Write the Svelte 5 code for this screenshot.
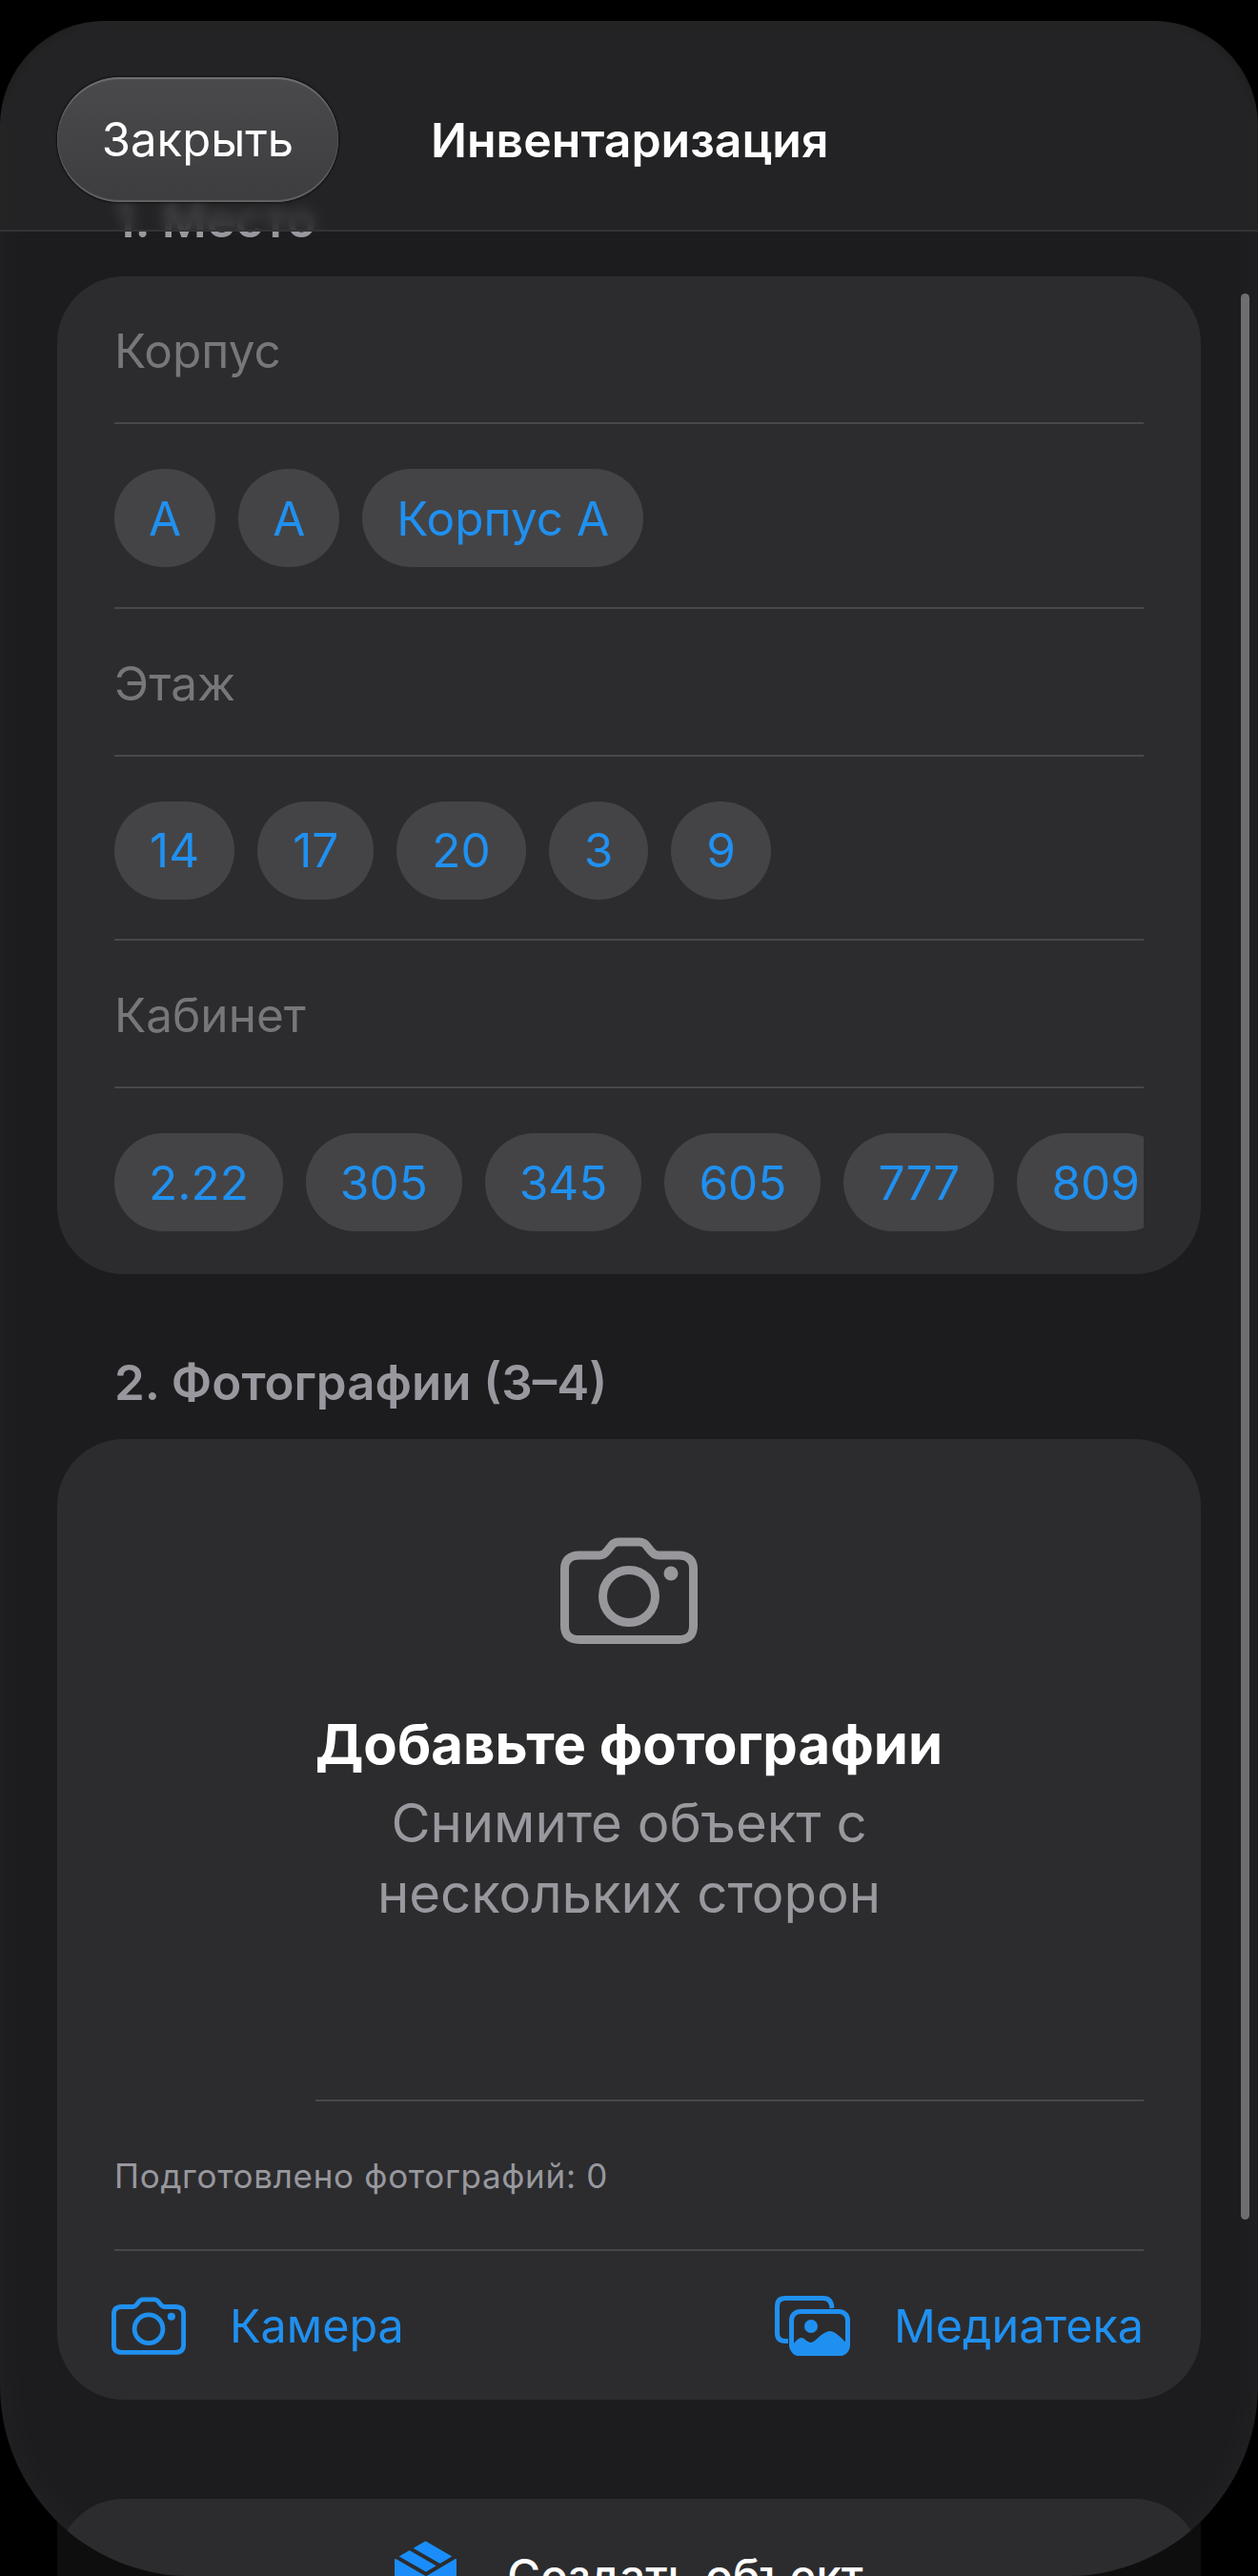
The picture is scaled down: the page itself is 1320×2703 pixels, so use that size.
<script>
  const buildings = ['A', 'A', 'Корпус A'];
  const floors = ['14', '17', '20', '3', '9'];
  const rooms = ['2.22', '305', '345', '605', '777', '809'];

  const sections = [
    { label: 'Корпус', chips: buildings },
    { label: 'Этаж', chips: floors, loose: true },
    { label: 'Кабинет', chips: rooms },
  ];

  const cameraBody =
    'M20 19 H41 C45 19 47 17 49 14.5 L53 9.5 C55 6.5 57 5 61 5 H83 C87 5 89 6.5 91 9.5 L95 14.5 C97 17 99 19 103 19 H124 C134 19 139.5 24 139.5 33 V93 C139.5 103 134 107.5 124 107.5 H20 C10 107.5 4.5 103 4.5 93 V33 C4.5 24 10 19 20 19 Z';
</script>

{#snippet camera(cls)}
  <svg class={cls} viewBox="0 0 144 112" fill="none" stroke="currentColor" stroke-width="9">
    <path d={cameraBody} />
    <circle cx="72" cy="62" r="27.5" />
    <circle cx="116" cy="38" r="7.5" fill="currentColor" stroke="none" />
  </svg>
{/snippet}

<div class="page">
  <div class="under"></div>
  <div class="sheet">
    <div class="content">
      <h2>1. Место</h2>
      <section class="card">
        {#each sections as s, i}
          <div class="label-row">{s.label}</div>
          <div class="chips" class:last={i === sections.length - 1} class:loose={s.loose}>
            {#each s.chips as c}
              <span class="chip">{c}</span>
            {/each}
          </div>
        {/each}
      </section>

      <h2 class="second">2. Фотографии (3–4)</h2>
      <section class="card photos">
        <div class="empty">
          {@render camera('cam-big')}
          <div class="empty-title">Добавьте фотографии</div>
          <div class="empty-sub">Снимите объект с<br />нескольких сторон</div>
        </div>
        <div class="rule short"></div>
        <div class="count">Подготовлено фотографий: 0</div>
        <div class="rule"></div>
        <div class="actions">
          <span class="action">
            {@render camera('cam-small')}
            Камера
          </span>
          <span class="action lib">
            <svg class="lib-icon" viewBox="0 0 79 63" fill="none" stroke="currentColor" stroke-width="5">
              <path d="M14 47.5 H11 C5.5 47.5 2.5 44.5 2.5 39 V11 C2.5 5.5 5.5 2.5 11 2.5 H51 C56.5 2.5 59.5 5.5 60 13" />
              <rect x="17.5" y="16.5" width="59" height="44" rx="9" />
              <circle cx="38" cy="32" r="7" fill="currentColor" stroke="none" />
              <path fill="currentColor" stroke="none" d="M17 54 C20 50 24 44 28 44 C31 44 34 49 38 49 C42 49 50 37 58 37 C64 37 71 46 78 52 V54 C78 60 73 63 67 63 H26 C20 63 17 60 17 54 Z" />
            </svg>
            Медиатека
          </span>
        </div>
      </section>

      <section class="card create">
        <svg class="box-icon" viewBox="0 0 65 74">
          <path fill="#1a8dfa" stroke="#1a8dfa" stroke-width="3" stroke-linejoin="round" d="M32.5 2 L63.5 20 V54 L32.5 72 L1.5 54 V20 Z" />
          <path fill="none" stroke="#2c2c2e" stroke-width="4" d="M0 16 L33 35 L65 16 M16 8 L49 27" />
        </svg>
        <span>Создать объект</span>
      </section>
    </div>

    <header class="topbar">
      <button class="close">Закрыть</button>
      <span class="title">Инвентаризация</span>
    </header>
    <div class="scrollbar"></div>
  </div>
</div>

<style>
  :global(body) {
    margin: 0;
    background: #000;
  }
  .page {
    position: relative;
    width: 1320px;
    height: 2703px;
    padding-top: 22px;
    box-sizing: border-box;
    overflow: hidden;
    background: #000;
    font-family: Inter, "Noto Sans", sans-serif;
  }
  .under {
    position: absolute;
    left: 60px;
    right: 60px;
    bottom: 0;
    height: 60px;
    background: #0e0e0f;
  }
  .sheet {
    position: relative;
    height: 2681px;
    overflow: hidden;
    background: #1c1c1e;
    border-radius: 110px 110px 200px 200px;
    box-shadow: inset 0 0 50px rgba(255, 255, 255, 0.035);
  }
  .content {
    padding: 179px 60px 0;
  }
  h2 {
    margin: 0 0 29px;
    padding-left: 60px;
    font-size: 51px;
    line-height: 60px;
    font-weight: 600;
    color: #98989e;
  }
  h2.second {
    margin-top: 84px;
  }
  .card {
    background: #2c2c2e;
    border-radius: 70px;
    padding: 0 60px;
  }

  .label-row {
    height: 155px;
    padding-top: 3px;
    display: flex;
    align-items: center;
    font-size: 49.5px;
    color: #77777b;
    border-bottom: 2px solid #48484a;
    box-sizing: border-box;
  }
  .chips {
    display: flex;
    gap: 24px;
    height: 193.5px;
    padding-top: 47px;
    box-sizing: border-box;
    overflow: hidden;
    border-bottom: 2px solid #48484a;
  }
  .chips.last {
    height: 195px;
    border-bottom: 0;
  }
  .chip {
    flex: none;
    height: 103px;
    padding: 0 36px;
    display: flex;
    align-items: center;
    border-radius: 52px;
    background: #444446;
    color: #2090f0;
    font-size: 49.5px;
  }
  .loose .chip {
    padding: 0 37px;
  }

  .photos {
    padding: 0;
  }
  .empty {
    height: 693px;
    padding-top: 103px;
    box-sizing: border-box;
    display: flex;
    flex-direction: column;
    align-items: center;
  }
  .cam-big {
    width: 144px;
    height: 112px;
    color: #98989c;
    flex: none;
  }
  .empty-title {
    margin-top: 70px;
    font-size: 58px;
    line-height: 70px;
    font-weight: 700;
    color: #fff;
  }
  .empty-sub {
    margin-top: 11px;
    font-size: 56.3px;
    line-height: 74px;
    color: #98989e;
    text-align: center;
  }
  .rule {
    height: 2px;
    margin: 0 60px;
    background: #48484a;
  }
  .rule.short {
    margin-left: 271px;
  }
  .count {
    height: 155px;
    padding: 0 60px;
    display: flex;
    align-items: center;
    font-size: 35px;
    letter-spacing: 0.7px;
    color: #98989e;
  }
  .actions {
    height: 156px;
    padding: 0 60px 0 57px;
    display: flex;
    align-items: center;
    justify-content: space-between;
    font-size: 48.5px;
    color: #2090f0;
  }
  .action {
    display: flex;
    align-items: center;
    gap: 46px;
  }
  .cam-small {
    width: 78px;
    height: 61px;
  }
  .lib-icon {
    width: 79px;
    height: 63px;
  }

  .create {
    margin-top: 104px;
    height: 200px;
    padding: 44px 0 0;
    box-sizing: border-box;
    display: flex;
    justify-content: center;
    gap: 53px;
    color: #fff;
    font-size: 47.5px;
    font-weight: 500;
  }
  .box-icon {
    width: 65px;
    height: 74px;
    flex: none;
  }
  .create span {
    line-height: 74px;
  }

  .topbar {
    position: absolute;
    left: 0;
    right: 0;
    top: 0;
    height: 221px;
    box-sizing: border-box;
    border-bottom: 2px solid #333335;
    background: rgba(38, 38, 40, 0.7);
    backdrop-filter: blur(7px);
    display: flex;
    align-items: flex-start;
    padding: 59px 0 0 60px;
  }
  .close {
    width: 295px;
    height: 131px;
    padding: 0;
    border: 0;
    border-radius: 66px;
    background: linear-gradient(#4a4a4c, #3d3d3f);
    box-shadow:
      inset 0 2px 1px rgba(255, 255, 255, 0.22),
      inset 0 -2px 1px rgba(255, 255, 255, 0.2),
      0 0 2px 1px rgba(0, 0, 0, 0.55);
    color: #fff;
    font: 400 49px Inter, "Noto Sans", sans-serif;
  }
  .title {
    margin: 33px 0 0 97px;
    font-size: 50px;
    line-height: 66px;
    font-weight: 600;
    color: #fff;
  }
  .scrollbar {
    position: absolute;
    left: 1302px;
    top: 286px;
    width: 9px;
    height: 2021px;
    border-radius: 5px;
    background: #6e6e70;
  }
</style>
